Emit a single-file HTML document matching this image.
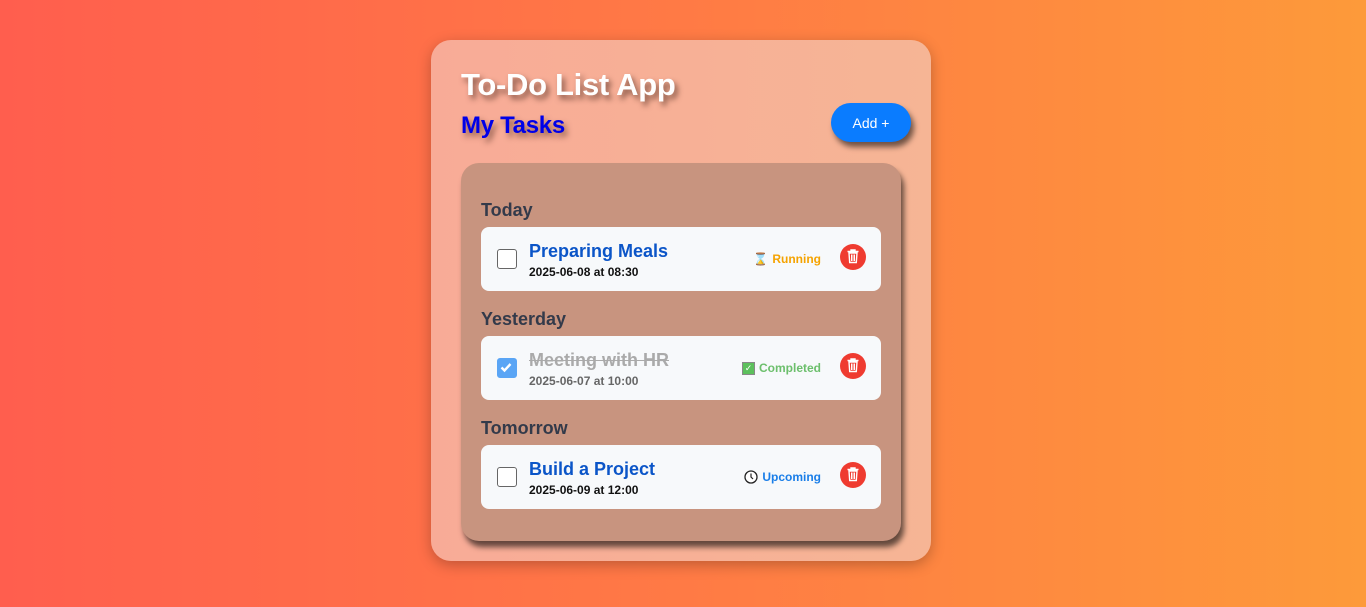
<!DOCTYPE html>
<html><head><meta charset="utf-8"><style>
*{box-sizing:border-box;margin:0;padding:0}
body{width:1366px;height:607px;overflow:hidden;background:linear-gradient(90deg,#ff5e4e 0%,#ff7a45 50%,#fd9a3a 100%);font-family:"Liberation Sans","DejaVu Sans",sans-serif;position:relative}
.card{position:absolute;left:431px;top:40px;width:500px;height:521px;border-radius:20px;background:linear-gradient(90deg,#f8ab97,#f6b595);box-shadow:0 4px 14px rgba(0,0,0,.25)}
h1{position:absolute;left:30px;top:27px;font-size:31px;font-weight:bold;color:#fff;text-shadow:3px 4px 6px rgba(60,30,20,.6);letter-spacing:-0.3px}
h2{position:absolute;left:30px;top:72px;font-size:24px;font-weight:bold;color:#0000e8;text-shadow:3px 4px 6px rgba(60,30,20,.55);letter-spacing:-0.3px}
.add{position:absolute;left:400px;top:63px;width:80px;height:39px;border-radius:20px;background:#0a7cff;color:#fff;font-size:14px;display:flex;align-items:center;justify-content:center;box-shadow:3px 5px 6px rgba(0,0,0,.55)}
.panel{position:absolute;left:30px;top:123px;width:440px;height:378px;border-radius:18px;background:#c8947f;box-shadow:3px 6px 6px rgba(0,0,0,.6)}
.lbl{position:absolute;left:20px;font-size:18px;font-weight:bold;color:#333a4a}
.task{position:absolute;left:20px;width:400px;height:64px;border-radius:8px;background:#f7f9fb}
.cb{position:absolute;left:16px;top:22px;width:20px;height:20px;border:1.5px solid #666;border-radius:3px;background:#fff}
.cb.on{background:#5aa5f5;border-color:#5aa5f5}
.t{position:absolute;left:48px;top:14px;font-size:18px;font-weight:bold;color:#0b55c8}
.d{position:absolute;left:48px;top:38px;font-size:12px;font-weight:bold;color:#111}
.st{position:absolute;right:60px;top:25px;font-size:12px;font-weight:bold;display:flex;align-items:center;gap:4px}
.del{position:absolute;left:359px;top:17px;width:26px;height:26px;border-radius:50%;background:#ef3b30}
</style></head><body>
<div class="card">
<h1>To-Do List App</h1>
<h2>My Tasks</h2>
<div class="add">Add +</div>
<div class="panel">
<div class="lbl" style="top:37px">Today</div>
<div class="task" style="top:64px"><div class="cb"></div><div class="t">Preparing Meals</div><div class="d">2025-06-08 at 08:30</div>
<div class="st" style="color:#f5a300"><span style="color:#a0522d;font-size:12px">⌛</span>Running</div>
<div class="del"><svg width="26" height="26" viewBox="0 0 26 26"><path d="M7.5 7.5h11M11 7.5V6h4v1.5M9 9l.7 9.5h6.6L17 9z" fill="none" stroke="#fff" stroke-width="1.4"/><path d="M11.5 10.5v6.5M13 10.5v6.5M14.5 10.5v6.5" stroke="#fff" stroke-width="1"/></svg></div></div>
<div class="lbl" style="top:146px">Yesterday</div>
<div class="task" style="top:173px"><div class="cb on"><svg width="17" height="17" viewBox="0 0 17 17"><path d="M3.5 8.5l3 3 6-6.5" fill="none" stroke="#fff" stroke-width="2.4"/></svg></div><div class="t" style="color:#aaa;text-decoration:line-through">Meeting with HR</div><div class="d" style="color:#666">2025-06-07 at 10:00</div>
<div class="st" style="color:#6cbf6c"><span style="display:inline-block;width:13px;height:13px;background:#5cc05c;border:1px solid #888;color:#fff;font-size:9px;line-height:11px;text-align:center">✓</span>Completed</div>
<div class="del"><svg width="26" height="26" viewBox="0 0 26 26"><path d="M7.5 7.5h11M11 7.5V6h4v1.5M9 9l.7 9.5h6.6L17 9z" fill="none" stroke="#fff" stroke-width="1.4"/><path d="M11.5 10.5v6.5M13 10.5v6.5M14.5 10.5v6.5" stroke="#fff" stroke-width="1"/></svg></div></div>
<div class="lbl" style="top:255px">Tomorrow</div>
<div class="task" style="top:282px"><div class="cb"></div><div class="t">Build a Project</div><div class="d">2025-06-09 at 12:00</div>
<div class="st" style="color:#1a7ee8"><svg width="14" height="14" viewBox="0 0 14 14"><circle cx="7" cy="7" r="6" fill="#fff" stroke="#222" stroke-width="1.3"/><path d="M7 3.5V7l2 2" fill="none" stroke="#222" stroke-width="1.2"/></svg>Upcoming</div>
<div class="del"><svg width="26" height="26" viewBox="0 0 26 26"><path d="M7.5 7.5h11M11 7.5V6h4v1.5M9 9l.7 9.5h6.6L17 9z" fill="none" stroke="#fff" stroke-width="1.4"/><path d="M11.5 10.5v6.5M13 10.5v6.5M14.5 10.5v6.5" stroke="#fff" stroke-width="1"/></svg></div></div>
</div>
</div>
</body></html>
